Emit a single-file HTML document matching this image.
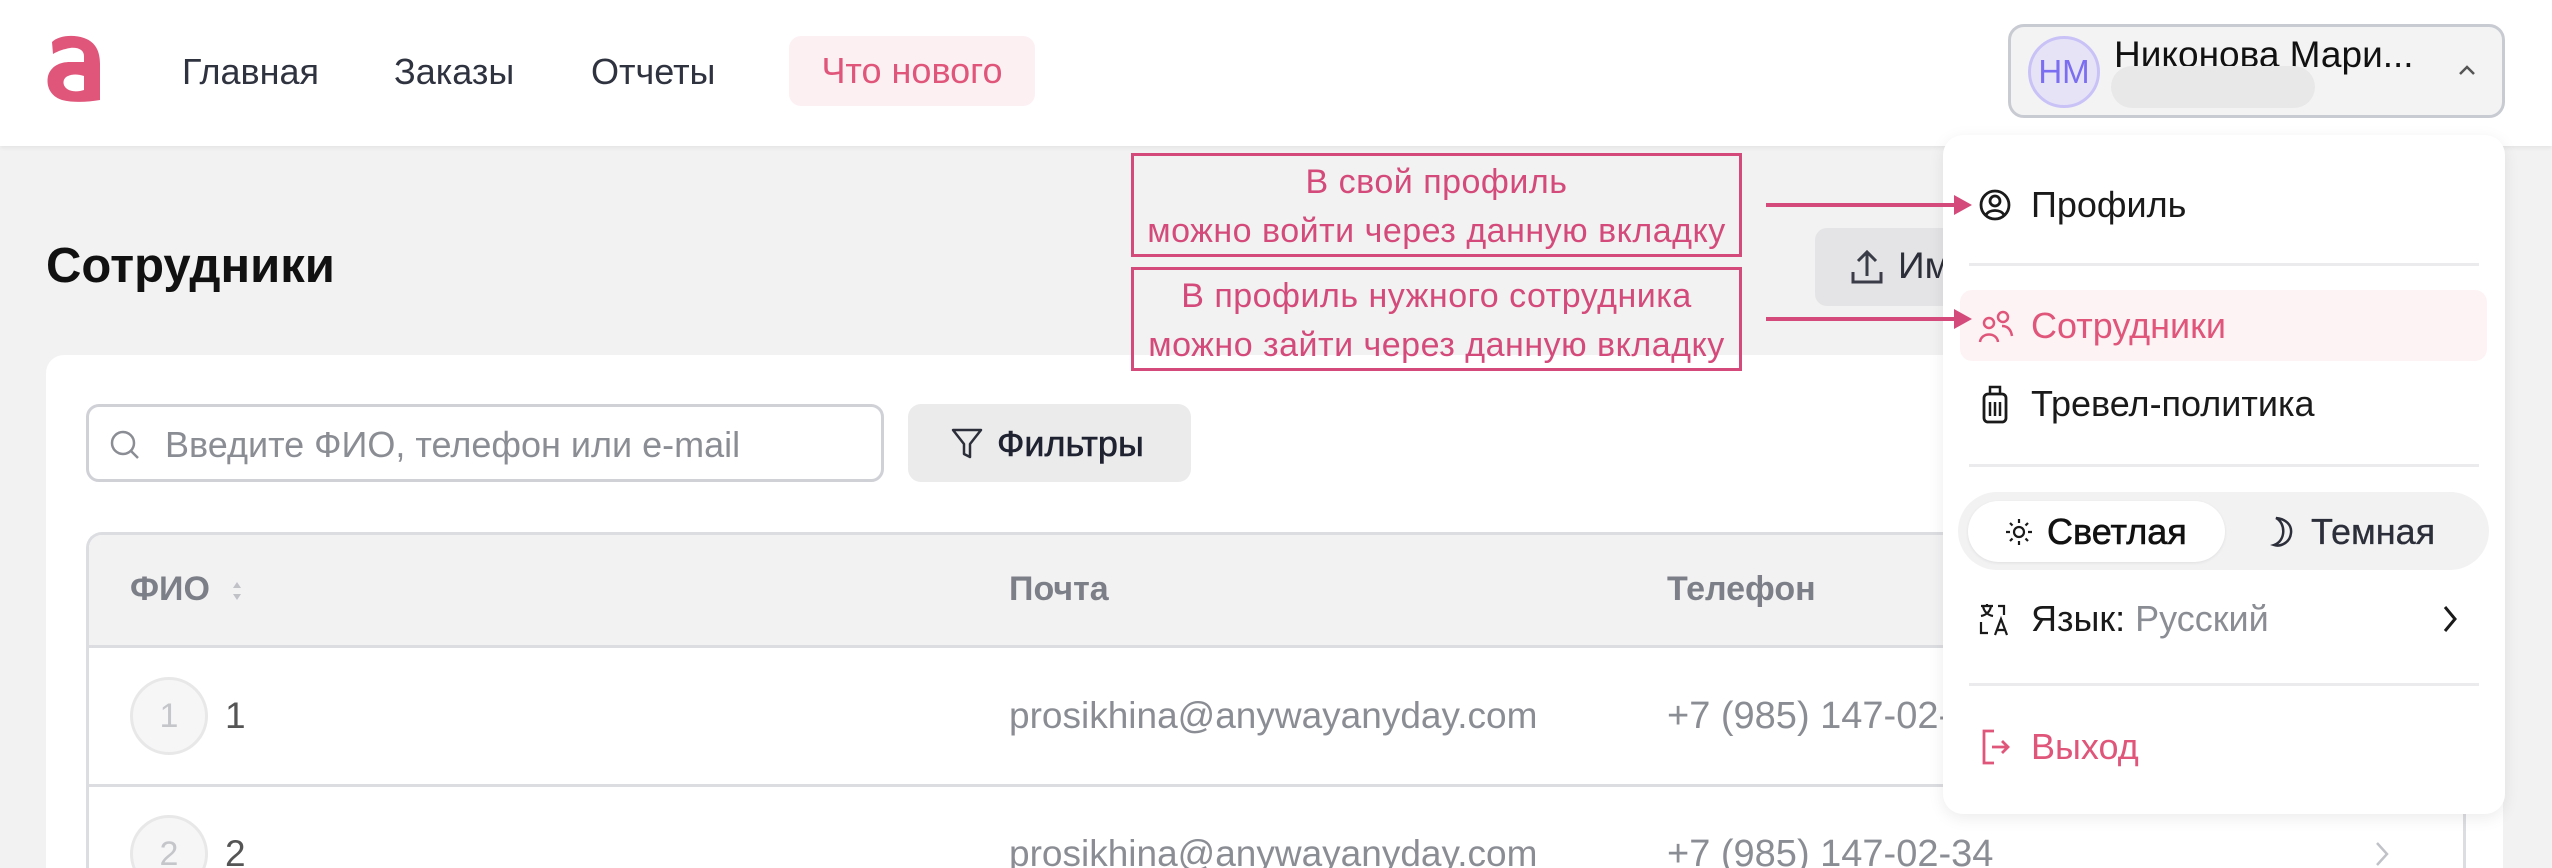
<!DOCTYPE html>
<html style="overflow:hidden;height:868px"><head><meta charset="utf-8"><style>
*{box-sizing:border-box;margin:0;padding:0}
body{width:2552px;height:868px;overflow:hidden;background:#f2f2f2;font-family:"Liberation Sans",sans-serif;position:relative}
.wrap{position:absolute;left:0;top:0;width:2552px;height:868px;overflow:hidden}
.a{position:absolute;white-space:nowrap}
.hdr{position:absolute;left:0;top:0;width:2552px;height:146px;background:#fff;box-shadow:0 2px 4px rgba(0,0,0,.06)}
.nav{font-size:36px;color:#2f3340;top:51px}
.sep{position:absolute;height:3px;background:#ebebed}
.mi{font-size:36px;color:#1a1a1a}
.ann{position:absolute;border:3px solid #d44a7a;color:#d44a7a;font-size:34px;text-align:center;line-height:49px;padding-top:2px;letter-spacing:0.5px}
</style></head><body><div class="wrap">
<div class="hdr"></div>
<svg class="a" style="left:44px;top:34px" width="60" height="70" viewBox="0 0 60 70"><path d="M8 8 C14 2 28 0 40 4 C52 8 56 18 56 30 L56 66 C44 68 30 69 18 66 C6 62 2 52 4 42 C7 32 16 28 26 28 L40 28 L40 22 C40 16 34 13 26 14 C20 15 14 17 9 20 Z M40 42 L40 56 C34 58 26 58 22 54 C18 50 19 44 24 42 C28 40 34 40 40 42 Z" fill="#e0557a" fill-rule="evenodd"/><circle cx="32" cy="23" r="3" fill="#fff"/></svg>
<div class="a nav" style="left:182px">Главная</div>
<div class="a nav" style="left:394px">Заказы</div>
<div class="a nav" style="left:591px">Отчеты</div>
<div class="a" style="left:789px;top:36px;width:246px;height:70px;background:#fdf0f3;border-radius:12px;color:#e0557a;font-size:36px;line-height:70px;text-align:center">Что нового</div>
<div class="a" style="left:2008px;top:24px;width:497px;height:94px;background:#f3f3f4;border:3px solid #c9cbd3;border-radius:16px"></div>
<div class="a" style="left:2028px;top:36px;width:72px;height:72px;border-radius:50%;background:#e6e3f7;border:3px solid #c9c2f7;color:#7b6ef0;font-size:33px;line-height:66px;text-align:center">НМ</div>
<div class="a" style="left:2114px;top:34px;font-size:37px;color:#111;font-weight:500">Никонова Мари...</div>
<div class="a" style="left:2111px;top:66px;width:204px;height:42px;border-radius:21px;background:#e8e8e9"></div>
<svg class="a" style="left:2456px;top:62px" width="22" height="16"><path d="M4 12 L11 5 L18 12" stroke="#555" stroke-width="2.5" fill="none"/></svg>

<div class="a" style="left:46px;top:238px;font-size:49px;font-weight:bold;color:#111">Сотрудники</div>
<div class="a" style="left:1815px;top:228px;width:180px;height:78px;background:#e4e4e6;border-radius:12px"></div>
<svg class="a" style="left:1850px;top:248px" width="34" height="38"><path d="M17 28 V4 M8 13 L17 4 L26 13 M3 24 V34 H31 V24" stroke="#3a3d48" stroke-width="3" fill="none"/></svg>
<div class="a" style="left:1898px;top:245px;font-size:37px;color:#2c2f3a">Им</div>
<div class="a" style="left:2460px;top:228px;width:45px;height:70px;background:#e0557a;border-radius:0 12px 12px 0"></div>

<div class="a" style="left:46px;top:355px;width:2457px;height:513px;background:#fff;border-radius:18px 18px 0 0"></div>
<div class="a" style="left:86px;top:404px;width:798px;height:78px;border:3px solid #cfd1d6;border-radius:13px;background:#fff"></div>
<svg class="a" style="left:108px;top:428px" width="34" height="34"><circle cx="15" cy="15" r="11" stroke="#8b8d94" stroke-width="2.5" fill="none"/><path d="M23 23 L30 30" stroke="#8b8d94" stroke-width="2.5"/></svg>
<div class="a" style="left:165px;top:424px;font-size:36px;color:#8b8d94">Введите ФИО, телефон или e-mail</div>
<div class="a" style="left:908px;top:404px;width:283px;height:78px;background:#ebebec;border-radius:13px"></div>
<svg class="a" style="left:950px;top:426px" width="34" height="34"><path d="M3 4 H31 L20 18 V31 L14 28 V18 Z" stroke="#2c2f3a" stroke-width="2.5" fill="none" stroke-linejoin="round"/></svg>
<div class="a" style="left:997px;top:423px;font-size:36px;color:#1f2230;font-weight:500;-webkit-text-stroke:0.6px #1f2230">Фильтры</div>

<div class="a" style="left:86px;top:532px;width:2380px;height:336px;border:3px solid #dcdde1;border-bottom:none;border-radius:16px 16px 0 0;overflow:hidden">
<div style="position:absolute;left:0;top:0;width:100%;height:113px;background:#f2f2f3;border-bottom:3px solid #dcdde1"></div>
<div style="position:absolute;left:0;top:249px;width:100%;height:3px;background:#dcdde1"></div>
</div>
<div class="a" style="left:130px;top:570px;font-size:34px;font-weight:bold;color:#7d7f88">ФИО</div>
<svg class="a" style="left:231px;top:580px" width="12" height="22"><path d="M6 2 L10 8 H2 Z M6 20 L10 14 H2 Z" fill="#c0c2c8"/></svg>
<div class="a" style="left:1009px;top:570px;font-size:34px;font-weight:bold;color:#7d7f88">Почта</div>
<div class="a" style="left:1667px;top:570px;font-size:34px;font-weight:bold;color:#7d7f88">Телефон</div>
<div class="a" style="left:130px;top:677px;width:78px;height:78px;border-radius:50%;border:3px solid #e8e8e9;background:#f6f6f7;color:#c5c6ca;font-size:34px;line-height:72px;text-align:center">1</div>
<div class="a" style="left:225px;top:695px;font-size:37px;color:#555">1</div>
<div class="a" style="left:1009px;top:695px;font-size:37px;color:#8b8d94">prosikhina@anywayanyday.com</div>
<div class="a" style="left:1667px;top:695px;font-size:38px;color:#8b8d94">+7 (985) 147-02-34</div>
<div class="a" style="left:130px;top:815px;width:78px;height:53px;overflow:hidden"><div style="width:78px;height:78px;border-radius:50%;border:3px solid #e8e8e9;background:#f6f6f7;color:#c5c6ca;font-size:34px;line-height:72px;text-align:center">2</div></div>
<div class="a" style="left:225px;top:833px;font-size:37px;color:#555;height:35px;overflow:hidden">2</div>
<div class="a" style="left:1009px;top:833px;font-size:37px;color:#8b8d94;height:35px;overflow:hidden">prosikhina@anywayanyday.com</div>
<div class="a" style="left:1667px;top:833px;font-size:38px;color:#8b8d94;height:35px;overflow:hidden">+7 (985) 147-02-34</div>
<svg class="a" style="left:2372px;top:840px" width="20" height="28"><path d="M5 3 L15 14 L5 25" stroke="#c0c2c8" stroke-width="2.5" fill="none"/></svg>

<div class="a" style="left:1943px;top:135px;width:562px;height:679px;background:#fff;border-radius:20px;box-shadow:0 4px 16px rgba(0,0,0,.08)"></div>
<svg class="a" style="left:1978px;top:188px" width="34" height="34"><circle cx="17" cy="17" r="14" stroke="#1a1a1a" stroke-width="2.8" fill="none"/><circle cx="17" cy="13" r="5" stroke="#1a1a1a" stroke-width="2.8" fill="none"/><path d="M8 27 C11 21 23 21 26 27" stroke="#1a1a1a" stroke-width="2.8" fill="none"/></svg>
<div class="a mi" style="left:2031px;top:184px">Профиль</div>
<div class="sep" style="left:1969px;top:263px;width:510px"></div>
<div class="a" style="left:1960px;top:290px;width:527px;height:71px;background:#fdf3f5;border-radius:12px"></div>
<svg class="a" style="left:1978px;top:310px" width="36" height="34"><circle cx="11" cy="13" r="5" stroke="#e0557a" stroke-width="2.5" fill="none"/><path d="M2 32 C3 22 19 22 20 32" stroke="#e0557a" stroke-width="2.5" fill="none"/><circle cx="25" cy="7" r="5" stroke="#e0557a" stroke-width="2.5" fill="none"/><path d="M24 16 C30 16 33 20 34 26" stroke="#e0557a" stroke-width="2.5" fill="none"/></svg>
<div class="a mi" style="left:2031px;top:305px;color:#e0557a">Сотрудники</div>
<svg class="a" style="left:1980px;top:384px" width="30" height="42"><rect x="4" y="10" width="22" height="28" rx="4" stroke="#1a1a1a" stroke-width="2.8" fill="none"/><path d="M10 10 V3 H20 V10 M10 18 V32 M15 18 V32 M20 18 V32" stroke="#1a1a1a" stroke-width="2.5" fill="none"/></svg>
<div class="a mi" style="left:2031px;top:383px">Тревел-политика</div>
<div class="sep" style="left:1969px;top:464px;width:510px"></div>
<div class="a" style="left:1958px;top:492px;width:531px;height:78px;background:#f2f2f3;border-radius:39px"></div>
<div class="a" style="left:1968px;top:501px;width:257px;height:61px;background:#fff;border-radius:31px;box-shadow:0 1px 3px rgba(0,0,0,.08)"></div>
<svg class="a" style="left:2004px;top:517px" width="30" height="30"><circle cx="15" cy="15" r="5" stroke="#1a1a1a" stroke-width="2.2" fill="none"/><path d="M15 2V6M15 24V28M2 15H6M24 15H28M6 6L8.5 8.5M21.5 21.5L24 24M6 24L8.5 21.5M21.5 8.5L24 6" stroke="#1a1a1a" stroke-width="2.2"/></svg>
<div class="a" style="left:2047px;top:511px;font-size:36px;color:#111;-webkit-text-stroke:0.6px #111">Светлая</div>
<svg class="a" style="left:2266px;top:515px" width="28" height="34"><path d="M10 3 C20 8 20 26 8 30 C14 32 24 28 25 18 C26 10 20 4 10 3 Z" stroke="#2c2f3a" stroke-width="2.5" fill="none"/></svg>
<div class="a" style="left:2311px;top:511px;font-size:36px;color:#2c2f3a;-webkit-text-stroke:0.3px #2c2f3a">Темная</div>
<svg class="a" style="left:1978px;top:602px" width="34" height="36"><path d="M3 4H15M9 2V4M5 4C6 10 10 13 15 14M13 4C12 10 8 13 3 14M20 4H26V13M3 20V31H10" stroke="#1a1a1a" stroke-width="2.2" fill="none"/><path d="M17 33L23 17L29 33M19 28H27" stroke="#1a1a1a" stroke-width="2.2" fill="none"/></svg>
<div class="a mi" style="left:2031px;top:598px">Язык: <span style="color:#8b8d94">Русский</span></div>
<svg class="a" style="left:2440px;top:604px" width="20" height="30"><path d="M5 3 L15 15 L5 27" stroke="#1a1a1a" stroke-width="3" fill="none"/></svg>
<div class="sep" style="left:1969px;top:683px;width:510px"></div>
<svg class="a" style="left:1980px;top:728px" width="32" height="38"><path d="M14 3H4V35H14" stroke="#e0557a" stroke-width="2.8" fill="none"/><path d="M12 19H28M22 13L28 19L22 25" stroke="#e0557a" stroke-width="2.8" fill="none"/></svg>
<div class="a mi" style="left:2031px;top:726px;color:#e0557a">Выход</div>

<div class="ann" style="left:1131px;top:153px;width:611px;height:104px">В свой профиль<br>можно войти через данную вкладку</div>
<div class="ann" style="left:1131px;top:267px;width:611px;height:104px">В профиль нужного сотрудника<br>можно зайти через данную вкладку</div>
<svg class="a" style="left:1760px;top:190px" width="220" height="145"><path d="M6 15 H196" stroke="#d44a7a" stroke-width="4"/><path d="M194 5 L212 15 L194 25 Z" fill="#d44a7a"/><path d="M6 129 H196" stroke="#d44a7a" stroke-width="4"/><path d="M194 119 L212 129 L194 139 Z" fill="#d44a7a"/></svg>
</div></body></html>
